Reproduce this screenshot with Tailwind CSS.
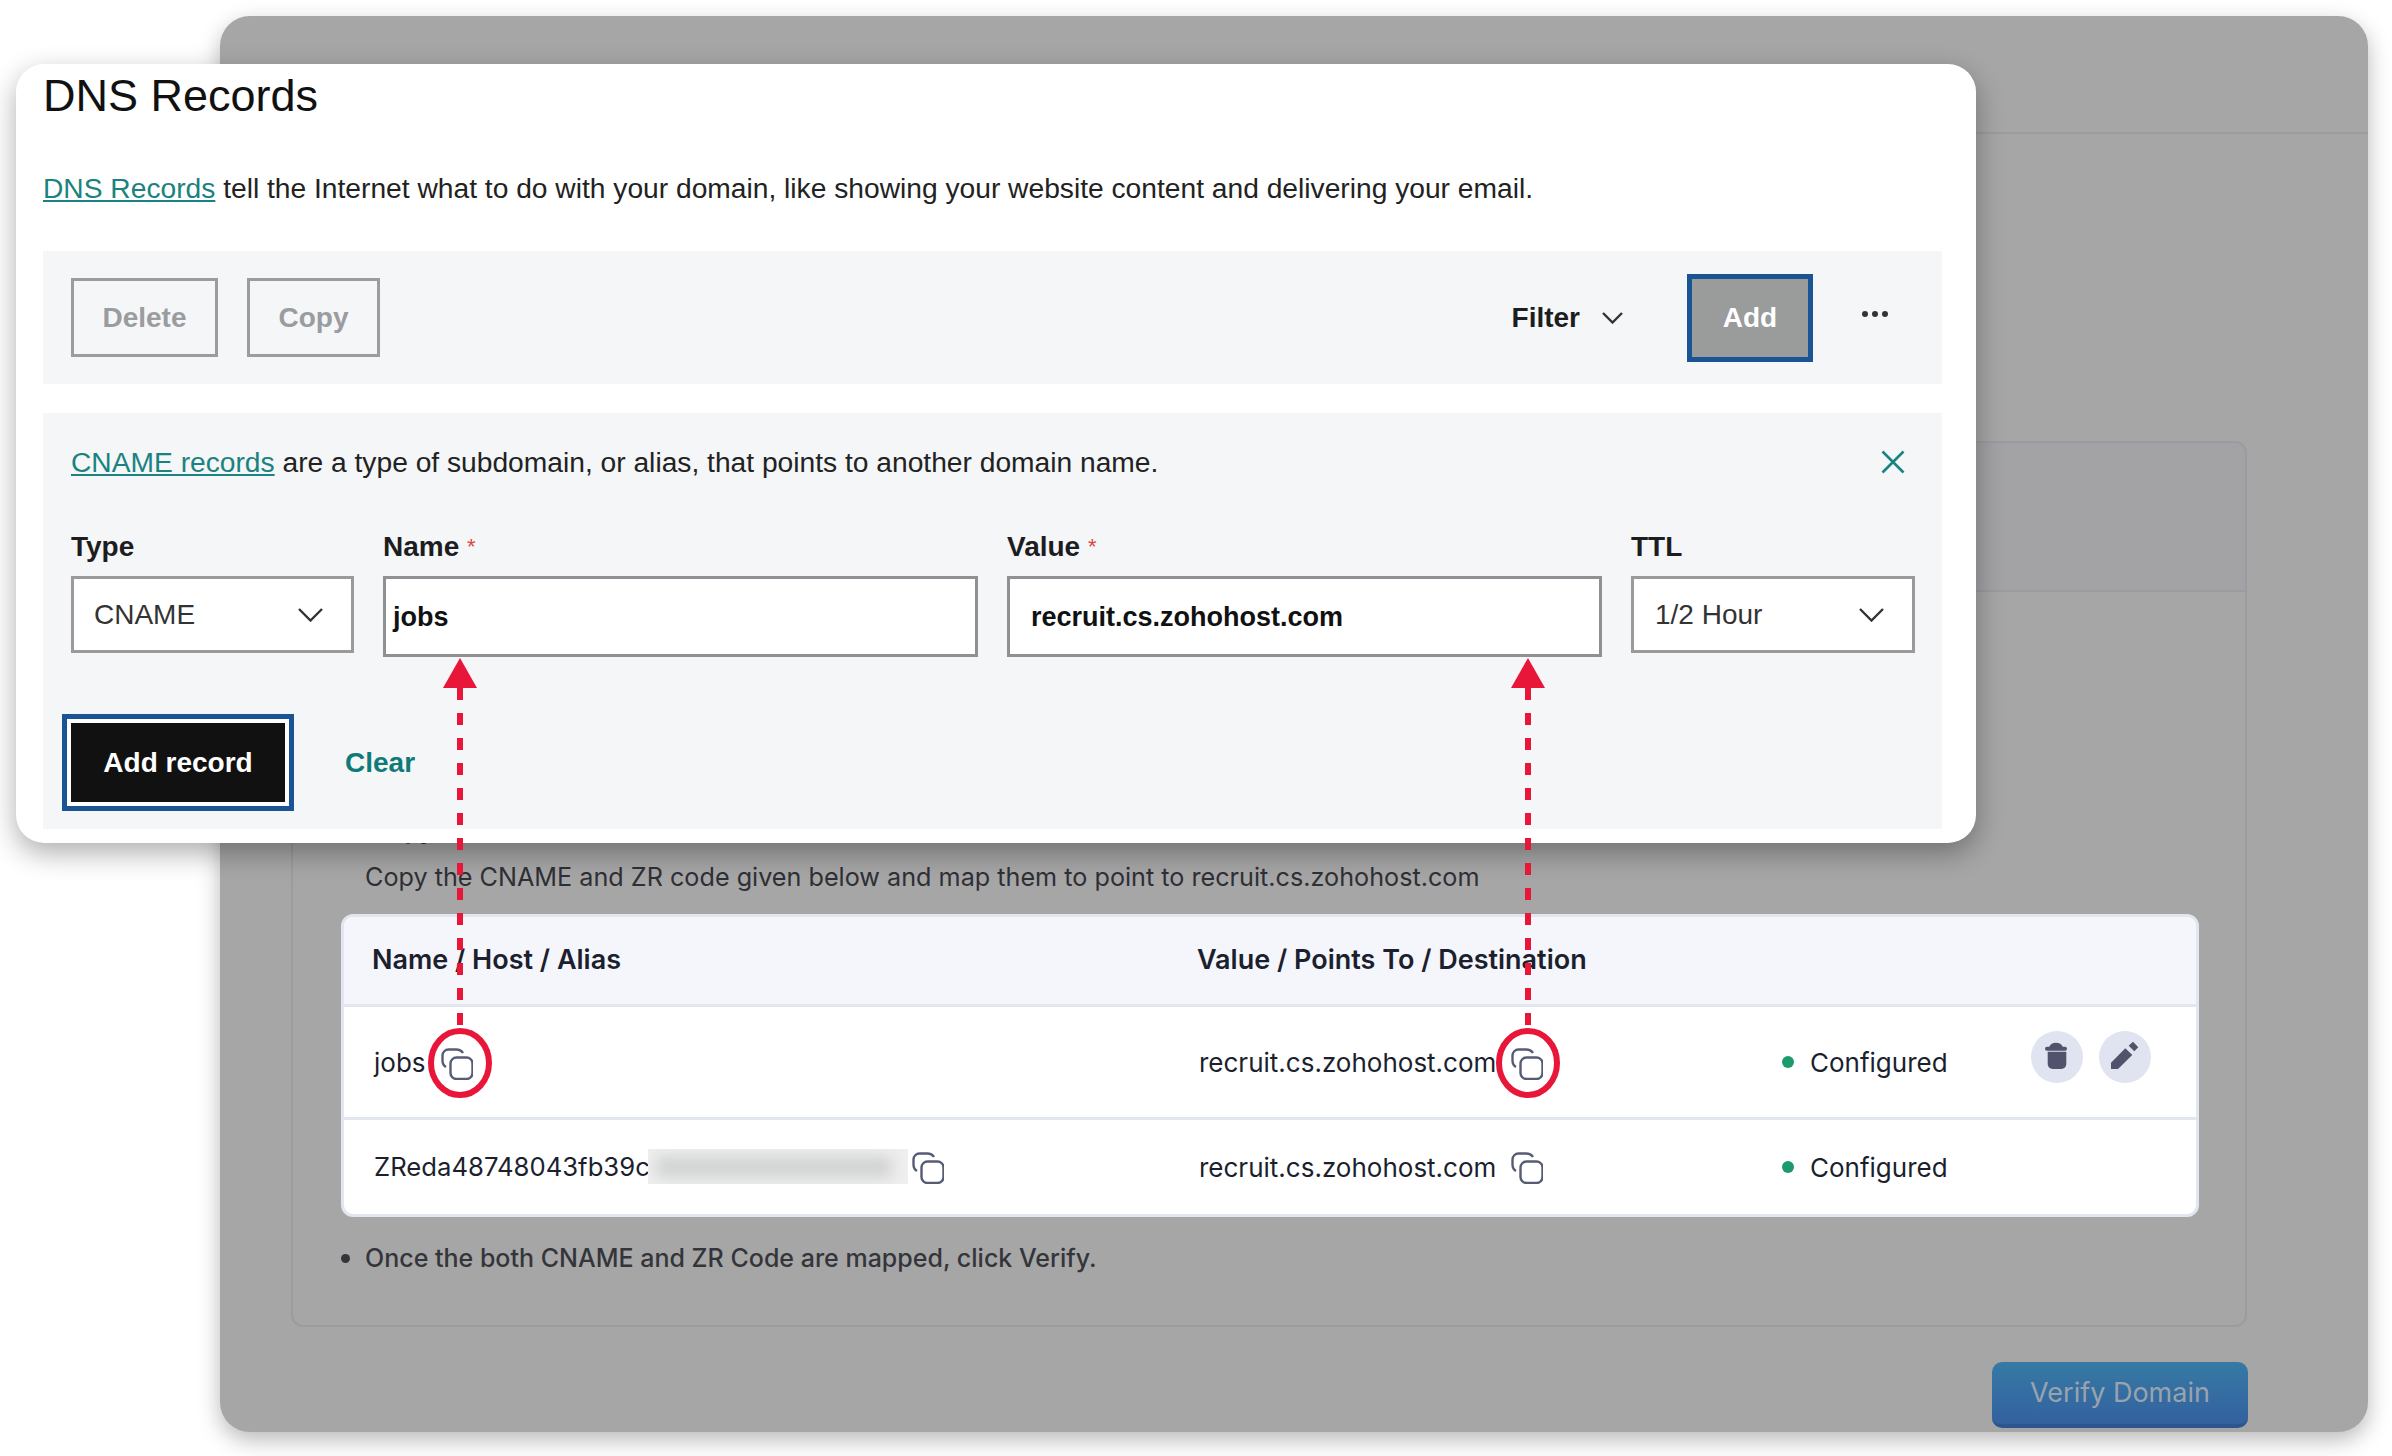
<!DOCTYPE html>
<html lang="en">
<head>
  <meta charset="UTF-8" />
  <title>DNS Records</title>
  <script src="https://cdn.jsdelivr.net/npm/@tailwindcss/browser@4"></script>
</head>
<body class="bg-white">
  <div class="relative w-[2392px] h-[1456px] overflow-hidden pt-[16px] pl-[220px] font-['Inter',sans-serif]">

    <!-- window behind the dialog -->
    <div class="w-[2148px] h-[1416px] rounded-[30px] bg-[#a6a6a6] shadow-[0_8px_22px_rgba(0,0,0,0.28)]">
      <div class="h-[118px] border-b-2 border-[#9b9ba0]"></div>
      <div class="ml-[71px] mt-[307px] w-[1956px] h-[886px] rounded-[12px] border-2 border-[#9b9ba0]">
        <div class="h-[149px] border-b-2 border-[#9b9ba0] bg-[#a3a3a6] rounded-t-[12px]"></div>
        <p class="mt-[222px] ml-[78px] text-[25px] leading-[32px] font-semibold text-[#2c2d33]">Copy</p>
        <p class="mt-[14px] ml-[72px] text-[25.2px] leading-[34px] text-[#2f3036]">Copy the CNAME and ZR code given below and map them to point to recruit.cs.zohohost.com</p>

        <div class="mt-[20px] ml-[48px] w-[1858px] h-[303px] rounded-[12px] border-[3px] border-[#e1e6f1] bg-white overflow-hidden text-[26px] text-[#1c1f2e]">
          <div class="flex items-center h-[90px] pl-[28px] bg-[#f4f6fb] border-b-[3px] border-[#e1e6f1] text-[27px] font-semibold">
            <div class="w-[825px]">Name / Host / Alias</div>
            <div>Value / Points To / Destination</div>
          </div>
          <div class="flex items-center h-[113px] pl-[30px] border-b-[3px] border-[#e1e6f1]">
            <div class="w-[825px] flex items-center gap-[15px]">
              <span>jobs</span>
              <svg class="w-[32px] h-[32px] mt-[3px]" viewBox="0 0 32 32" fill="none" stroke="#565c74" stroke-width="2.4"><rect x="9.5" y="9.5" width="22" height="21.5" rx="6"/><path d="M5 19C2.500 17.500 1.500 15 1.500 12.500V7.500A6 6 0 0 1 7.500 1.500H15C18 1.500 20.500 2.500 22 5"/></svg>
            </div>
            <div class="w-[583px] flex items-center gap-[4px]">
              <span>recruit.cs.zohohost.com</span>
              <svg class="w-[32px] h-[32px] ml-[11px] mt-[3px]" viewBox="0 0 32 32" fill="none" stroke="#565c74" stroke-width="2.4"><rect x="9.5" y="9.5" width="22" height="21.5" rx="6"/><path d="M5 19C2.500 17.500 1.500 15 1.500 12.500V7.500A6 6 0 0 1 7.500 1.500H15C18 1.500 20.500 2.500 22 5"/></svg>
            </div>
            <div class="w-[249px] flex items-center">
              <span class="w-[12px] h-[12px] rounded-full bg-[#1d9a6c] mr-[16px]"></span>
              <span>Configured</span>
            </div>
            <div class="flex gap-[16px] mb-[10px]">
              <span class="w-[52px] h-[52px] rounded-full bg-[#dfe4f0]">
                <svg class="w-[52px] h-[52px]" viewBox="0 0 52 52" fill="#50536b"><path d="M14 17.500Q14 15.700 16 15.700H18.300Q20 11.700 25 11.700T31.700 15.700H34Q36 15.700 36 17.700T34 19.700H16Q14 19.700 14 17.500Z"/><path d="M16.700 20.800H35.300V33A5 5 0 0 1 30.300 38H21.700A5 5 0 0 1 16.700 33Z"/></svg>
              </span>
              <span class="w-[52px] h-[52px] rounded-full bg-[#dfe4f0]">
                <svg class="w-[52px] h-[52px]" viewBox="0 0 52 52" fill="#50536b"><path d="M12 38V31.700L26.300 17.300L33.300 24L19 38Z"/><path d="M29.700 14.700L34 10.700L39.300 16.300L35.300 20.300Z"/></svg>
              </span>
            </div>
          </div>
          <div class="flex items-center h-[94px] pl-[30px]">
            <div class="w-[825px] flex items-center">
              <span class="w-[274px] text-[25.7px]">ZReda48748043fb39c</span>
              <div class="w-[260px] h-[35px] bg-[#efefef] overflow-hidden">
                <div class="w-[236px] h-[22px] mt-[7px] ml-[8px] bg-[#d2d3d4] blur-[7px]"></div>
              </div>
              <svg class="w-[32px] h-[32px] ml-[4px] mt-[2px]" viewBox="0 0 32 32" fill="none" stroke="#565c74" stroke-width="2.4"><rect x="9.5" y="9.5" width="22" height="21.5" rx="6"/><path d="M5 19C2.500 17.500 1.500 15 1.500 12.500V7.500A6 6 0 0 1 7.500 1.500H15C18 1.500 20.500 2.500 22 5"/></svg>
            </div>
            <div class="w-[583px] flex items-center gap-[4px]">
              <span>recruit.cs.zohohost.com</span>
              <svg class="w-[32px] h-[32px] ml-[11px] mt-[2px]" viewBox="0 0 32 32" fill="none" stroke="#565c74" stroke-width="2.4"><rect x="9.5" y="9.5" width="22" height="21.5" rx="6"/><path d="M5 19C2.500 17.500 1.500 15 1.500 12.500V7.500A6 6 0 0 1 7.500 1.500H15C18 1.500 20.500 2.500 22 5"/></svg>
            </div>
            <div class="flex items-center">
              <span class="w-[12px] h-[12px] rounded-full bg-[#1d9a6c] mr-[16px]"></span>
              <span>Configured</span>
            </div>
          </div>
        </div>

        <div class="flex items-center mt-[23px] ml-[48px] text-[25px] font-medium text-[#34353b]">
          <span class="w-[9px] h-[9px] rounded-full bg-[#34353b] mr-[15px]"></span>
          <span>Once the both CNAME and ZR Code are mapped, click Verify.</span>
        </div>
      </div>

      <div class="flex justify-end pr-[120px] mt-[35px]">
        <div class="flex items-center justify-center w-[256px] h-[66px] rounded-[10px] border-b-[4px] border-[#2e5590] bg-gradient-to-b from-[#367aa4] to-[#33619f] text-[27px] text-[#9aa3ad]">Verify Domain</div>
      </div>
    </div>

    <!-- dialog on top -->
    <div class="absolute left-[16px] top-[64px] w-[1960px] h-[779px] rounded-[28px] bg-white shadow-[0_10px_28px_rgba(0,0,0,0.32)] pl-[27px] pr-[34px] font-['Liberation_Sans',sans-serif] text-[#1d1d1f]">
      <h1 class="text-[45px] leading-[64px] font-normal text-[#111]">DNS Records</h1>
      <p class="mt-[41px] text-[28.2px] leading-[38px] text-[#222]"><span class="text-[#1a8280] underline">DNS Records</span> tell the Internet what to do with your domain, like showing your website content and delivering your email.</p>

      <div class="flex items-center mt-[44px] h-[133px] bg-[#f4f6f8] pl-[28px]">
        <div class="flex items-center justify-center w-[147px] h-[79px] border-[3px] border-[#9b9c9f] text-[28px] font-bold text-[#9b9c9f]">Delete</div>
        <div class="flex items-center justify-center w-[133px] h-[79px] ml-[29px] border-[3px] border-[#9b9c9f] text-[28px] font-bold text-[#9b9c9f]">Copy</div>
        <div class="ml-auto text-[28px] font-bold text-[#1d1d1f]">Filter</div>
        <svg class="w-[21px] h-[12px] ml-[22px] mr-[64px]" viewBox="0 0 21 12" fill="none" stroke="#333" stroke-width="2.4"><path d="M1 1L10.500 10.500L20 1"/></svg>
        <div class="flex items-center justify-center w-[126px] h-[88px] border-[5px] border-[#1b5494] bg-[#9a9b9b] text-[28px] font-bold text-white">Add</div>
        <svg class="w-[28px] h-[8px] ml-[48px] mr-[53px] mb-[7px]" viewBox="0 0 28 8" fill="#333"><circle cx="4" cy="4" r="3"/><circle cx="14" cy="4" r="3"/><circle cx="24" cy="4" r="3"/></svg>
      </div>

      <div class="mt-[29px] h-[416px] bg-[#f4f6f8] pl-[28px] pr-[28px] pt-[31px]">
        <div class="flex items-center justify-between h-[36px]">
          <p class="text-[28.2px] text-[#222]"><span class="text-[#1a8280] underline">CNAME records</span> are a type of subdomain, or alias, that points to another domain name.</p>
          <svg class="w-[24px] h-[24px] mr-[9px]" viewBox="0 0 24 24" fill="none" stroke="#178482" stroke-width="2.600"><path d="M1.500 1.500L22.500 22.500M22.500 1.500L1.500 22.500"/></svg>
        </div>
        <div class="flex gap-[29px] mt-[49px]">
          <div class="w-[283px] shrink-0">
            <div class="h-[47px] text-[28px] font-bold leading-[36px] text-[#1d1d1f]">Type</div>
            <div class="flex items-center justify-between h-[77px] border-[3px] border-[#9a9a9c] bg-white pl-[20px] pr-[28px] text-[28px] text-[#333]">CNAME
              <svg class="w-[25px] h-[14px]" viewBox="0 0 25 14" fill="none" stroke="#333" stroke-width="2.4"><path d="M1 1L12.500 12.500L24 1"/></svg>
            </div>
          </div>
          <div class="w-[595px] shrink-0">
            <div class="h-[47px] text-[28px] font-bold leading-[36px] text-[#1d1d1f]">Name <span class="text-[#e0443c] font-normal text-[22px] align-top">*</span></div>
            <div class="flex items-center h-[81px] border-[3px] border-[#8f9093] bg-white pl-[7px] pt-[2px] text-[27px] font-bold text-[#111]">jobs</div>
          </div>
          <div class="w-[595px] shrink-0">
            <div class="h-[47px] text-[28px] font-bold leading-[36px] text-[#1d1d1f]">Value <span class="text-[#e0443c] font-normal text-[22px] align-top">*</span></div>
            <div class="flex items-center h-[81px] border-[3px] border-[#8f9093] bg-white pl-[21px] pt-[2px] text-[27px] font-bold text-[#111]">recruit.cs.zohohost.com</div>
          </div>
          <div class="w-[284px] shrink-0">
            <div class="h-[47px] text-[28px] font-bold leading-[36px] text-[#1d1d1f]">TTL</div>
            <div class="flex items-center justify-between h-[77px] border-[3px] border-[#9a9a9c] bg-white pl-[21px] pr-[28px] text-[28px] text-[#333]">1/2 Hour
              <svg class="w-[25px] h-[14px]" viewBox="0 0 25 14" fill="none" stroke="#333" stroke-width="2.4"><path d="M1 1L12.500 12.500L24 1"/></svg>
            </div>
          </div>
        </div>
        <div class="flex items-center mt-[57px] -ml-[9px]">
          <div class="flex items-center justify-center w-[232px] h-[97px] border-[5px] border-[#1b5494] bg-[#111] text-[28px] font-bold text-white outline-[4px] outline-white -outline-offset-[9px]">Add record</div>
          <div class="ml-[51px] text-[28px] font-bold text-[#0e7b78]">Clear</div>
        </div>
      </div>
    </div>

    <!-- red callouts -->
    <svg class="absolute left-0 top-0 w-[2392px] h-[1456px] pointer-events-none" viewBox="0 0 2392 1456" fill="none">
      <path d="M460 658L477 688H443Z" fill="#e8173a"/>
      <path d="M1528 658L1545 688H1511Z" fill="#e8173a"/>
      <path d="M460 688V1030" stroke="#e8173a" stroke-width="6" stroke-dasharray="12 13"/>
      <path d="M1528 688V1030" stroke="#e8173a" stroke-width="6" stroke-dasharray="12 13"/>
      <ellipse cx="460" cy="1063" rx="29" ry="32" stroke="#e8173a" stroke-width="6"/>
      <ellipse cx="1528" cy="1063" rx="29" ry="32" stroke="#e8173a" stroke-width="6"/>
    </svg>
  </div>
</body>
</html>
